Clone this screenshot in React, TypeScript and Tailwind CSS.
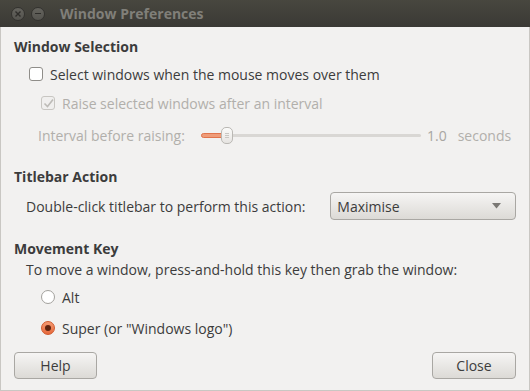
import { useState } from "react";

export default function App() {
    const [selectOnHover, setSelectOnHover] = useState(false);
    const [moveKey, setMoveKey] = useState("super");

    return (
        <div className="w-[530px] h-[391px] flex flex-col bg-[#f2f1f0] text-[#3c3c3c] text-[14px] overflow-hidden" style={{ fontFamily: '"Open Sans", "Noto Sans", sans-serif' }}>
            {/* Title bar */}
            <div className="h-[27px] flex items-center gap-[6px] px-[11px] bg-gradient-to-b from-[#48473f] to-[#3a3935] shrink-0">
                <div className="w-[14px] h-[14px] rounded-full bg-gradient-to-b from-[#64635d] to-[#55544f] border border-[#33322f] flex items-center justify-center">
                    <svg width="6" height="6" viewBox="0 0 6 6"><path d="M0.5 0.5 L5.5 5.5 M5.5 0.5 L0.5 5.5" stroke="#2e2d2a" strokeWidth="1.4" /></svg>
                </div>
                <div className="w-[14px] h-[14px] rounded-full bg-gradient-to-b from-[#64635d] to-[#55544f] border border-[#33322f] flex items-center justify-center">
                    <div className="w-[6px] h-[1.5px] bg-[#2e2d2a]" />
                </div>
                <span className="ml-[9px] text-[14px] font-bold text-[#807f79]">Window Preferences</span>
            </div>

            <div className="flex-1 flex flex-col border-x border-b border-[#c9c7c3] px-[13px]">
                {/* Window Selection */}
                <div className="mt-[10px] font-bold leading-[20px]">Window Selection</div>
                <label className="mt-[9px] ml-[15px] flex items-center gap-[7px] h-[16px]">
                    <span
                        onClick={() => setSelectOnHover(!selectOnHover)}
                        className="w-[14px] h-[14px] rounded-[3px] border border-[#8f8d89] bg-white"
                    />
                    <span>Select windows when the mouse moves over them</span>
                </label>
                <div className="mt-[13px] ml-[27px] flex items-center gap-[7px] h-[16px] text-[#b1afab]">
                    <span className="w-[14px] h-[14px] rounded-[3px] border border-[#c8c6c2] bg-[#f0efee] flex items-center justify-center">
                        <svg width="11" height="11" viewBox="0 0 11 11"><path d="M1.5 5.5 L4.5 8.5 L10 1.5" fill="none" stroke="#bdbbb7" strokeWidth="1.6" /></svg>
                    </span>
                    <span>Raise selected windows after an interval</span>
                </div>
                <div className="mt-[16px] ml-[24px] flex items-center h-[16px] text-[#b1afab]">
                    <span className="w-[163px]">Interval before raising:</span>
                    <div className="relative w-[220px] h-[16px] flex items-center">
                        <div className="w-full h-[3px] bg-[#d9d7d4] rounded-full" />
                        <div className="absolute left-0 w-[24px] h-[5px] rounded-full bg-[#ef9c79] border border-[#e0744c]" />
                        <div className="absolute left-[20px] w-[12px] h-[17px] rounded-[5px] border border-[#bab8b4] bg-gradient-to-b from-[#fbfbfa] to-[#e6e4e1] flex flex-col items-center justify-center gap-[1px]">
                            <div className="w-[4px] h-[1px] bg-[#c9c7c3]" />
                            <div className="w-[4px] h-[1px] bg-[#c9c7c3]" />
                            <div className="w-[4px] h-[1px] bg-[#c9c7c3]" />
                        </div>
                    </div>
                    <span className="ml-[6px] text-[#a8a6a2]">1.0</span>
                    <span className="ml-[11px]">seconds</span>
                </div>

                {/* Titlebar Action */}
                <div className="mt-[24px] font-bold leading-[20px]">Titlebar Action</div>
                <div className="mt-[5px] ml-[12px] flex items-center">
                    <span className="w-[305px]">Double-click titlebar to perform this action:</span>
                    <div className="w-[186px] h-[28px] rounded-[4px] border border-[#a9a7a3] bg-gradient-to-b from-[#f6f5f4] to-[#dcdad6] flex items-center justify-between pl-[6px] pr-[14px]">
                        <span>Maximise</span>
                        <svg width="9" height="6" viewBox="0 0 9 6"><path d="M0 0 H9 L4.5 5.5 Z" fill="#7a7874" /></svg>
                    </div>
                </div>

                {/* Movement Key */}
                <div className="mt-[19px] font-bold leading-[20px]">Movement Key</div>
                <div className="mt-[1px] ml-[12px] leading-[20px]">To move a window, press-and-hold this key then grab the window:</div>
                <label className="mt-[7px] ml-[27px] flex items-center gap-[7px] h-[20px]" onClick={() => setMoveKey("alt")}>
                    {moveKey === "alt" ? (
                        <span className="w-[14px] h-[14px] rounded-full bg-[#f08050] border border-[#d85a2c] flex items-center justify-center"><span className="w-[6px] h-[6px] rounded-full bg-[#6b2b14]" /></span>
                    ) : (
                        <span className="w-[14px] h-[14px] rounded-full bg-white border border-[#a3a19d]" />
                    )}
                    <span>Alt</span>
                </label>
                <label className="mt-[11px] ml-[27px] flex items-center gap-[7px] h-[20px]" onClick={() => setMoveKey("super")}>
                    {moveKey === "super" ? (
                        <span className="w-[14px] h-[14px] rounded-full bg-gradient-to-b from-[#f49a72] to-[#e6683a] border border-[#cf5a2e] flex items-center justify-center"><span className="w-[6px] h-[6px] rounded-full bg-[#5e2410]" /></span>
                    ) : (
                        <span className="w-[14px] h-[14px] rounded-full bg-white border border-[#a3a19d]" />
                    )}
                    <span>Super (or "Windows logo")</span>
                </label>

                {/* Buttons */}
                <div className="mt-[14px] flex justify-between">
                    <button className="w-[83px] h-[27px] rounded-[4px] border border-[#a9a7a3] bg-gradient-to-b from-[#f6f5f4] to-[#dcdad6] text-[#3c3c3c]">Help</button>
                    <button className="w-[84px] h-[27px] rounded-[4px] border border-[#a9a7a3] bg-gradient-to-b from-[#f6f5f4] to-[#dcdad6] text-[#3c3c3c]">Close</button>
                </div>
            </div>
        </div>
    );
}
